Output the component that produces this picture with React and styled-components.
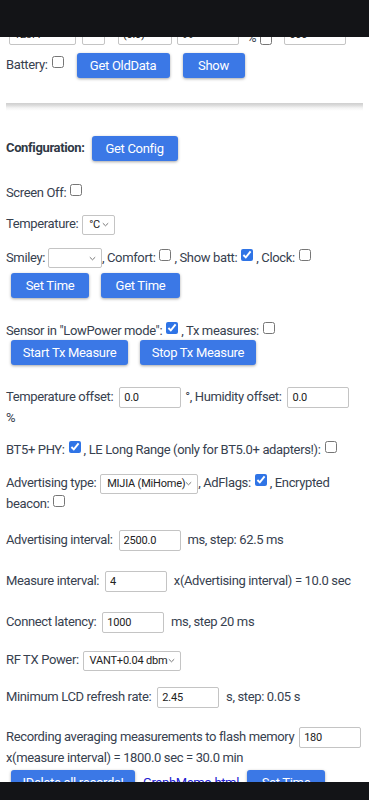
import React from 'react';
import styled, { createGlobalStyle } from 'styled-components';

const Global = createGlobalStyle`
  html, body { margin: 0; padding: 0; background: #fff; }
  body {
    font-family: Roboto, "Noto Sans", "Liberation Sans", sans-serif;
    font-size: 13px;
    letter-spacing: -0.36px;
    color: #37414f;
  }
`;

const TopBar = styled.div`
  position: fixed;
  top: 0;
  left: 0;
  right: 0;
  height: 37px;
  background: #131417;
  z-index: 10;
`;

const BottomBar = styled.div`
  position: fixed;
  bottom: 0;
  left: 0;
  right: 0;
  height: 18px;
  background: #131417;
  z-index: 10;
`;

const Page = styled.div`
  padding: 24px 6px 0;
`;

const InputStrip = styled.div`
  display: flex;
  align-items: flex-end;
  height: 21px;
`;

const Row = styled.div`
  line-height: 20px;
  margin-top: ${(p) => p.$mt || 0}px;
`;

const ButtonRow = styled.div`
  display: flex;
  gap: 12px;
  padding-left: 5px;
  margin-top: ${(p) => p.$mt || 0}px;
`;

const Button = styled.button`
  box-sizing: border-box;
  height: 25px;
  width: ${(p) => p.$w}px;
  margin-left: ${(p) => p.$ml || 0}px;
  padding: 0;
  border: none;
  border-radius: 3px;
  background: #3b78e6;
  color: #fff;
  font-family: Roboto, "Noto Sans", sans-serif;
  font-size: 13px;
  letter-spacing: -0.3px;
  box-shadow: 0 1px 3px rgba(0, 0, 0, 0.35);
  vertical-align: middle;
  flex: none;
`;

const Field = styled.input`
  box-sizing: border-box;
  width: ${(p) => p.$w}px;
  height: 21px;
  margin: 0 ${(p) => p.$mr || 0}px 0 ${(p) => p.$ml || 0}px;
  padding: 0 4px;
  border: 1px solid #c4c4c4;
  border-radius: 2px;
  background: #fff;
  color: #222;
  font-family: Roboto, "Noto Sans", sans-serif;
  font-size: 11px;
  letter-spacing: -0.2px;
  vertical-align: middle;
  flex: none;
`;

const SelectBox = styled.span`
  display: inline-flex;
  align-items: center;
  justify-content: space-between;
  box-sizing: border-box;
  width: ${(p) => p.$w}px;
  height: 20px;
  margin: 0 ${(p) => p.$mr || 0}px 0 ${(p) => p.$ml || 0}px;
  padding: 0 5px 0 6px;
  border: 1px solid #c4c4c4;
  border-radius: 2px;
  background: #fff;
  color: #222;
  font-size: 11px;
  letter-spacing: -0.2px;
  line-height: 18px;
  vertical-align: middle;
  white-space: nowrap;
`;

const Chevron = () => (
  <svg width="7" height="5" viewBox="0 0 7 5" style={{ flex: 'none' }}>
    <path d="M0.8 1.2 L3.5 3.8 L6.2 1.2" fill="none" stroke="#666" strokeWidth="0.9" />
  </svg>
);

const Select = ({ w, ml, children }) => (
  <SelectBox $w={w} $ml={ml}>
    <span>{children}</span>
    <Chevron />
  </SelectBox>
);

const Check = styled.input.attrs({ type: 'checkbox' })`
  width: 12px;
  height: 12px;
  margin: 0 3px 0 4px;
  accent-color: #2f74e6;
  vertical-align: 1px;
`;

const Label = styled.span`
  margin-left: ${(p) => p.$ml || 0}px;
  flex: none;
`;

const Rule = styled.div`
  margin: 25px 0 0;
  height: 8px;
  background: linear-gradient(#cfcfcf 0, #d9d9d9 2px, #f4f4f4 5px, #fff 8px);
`;

const Strong = styled.b`
  font-weight: 700;
  color: #2f3845;
`;

const Link = styled.a`
  color: #2020d0;
  text-decoration: underline;
  margin: 0 8px 0 8px;
  line-height: 25px;
`;

const BottomButtons = styled.div`
  display: flex;
  align-items: flex-start;
  padding-left: 5px;
  margin-top: 2px;
`;

export default function App() {
  return (
    <>
      <Global />
      <TopBar />
      <Page>
        <InputStrip>
          <Field $w={67} $ml={3} defaultValue="123.4" />
          <Field $w={23} $ml={6} defaultValue="" />
          <Field $w={54} $ml={13} defaultValue="(0:0)" />
          <Field $w={62} $ml={5} defaultValue="99" />
          <Label $ml={8}>%</Label>
          <Check />
          <Field $w={62} $ml={9} defaultValue="600" />
        </InputStrip>

        <Row $mt={8}>
          Battery:<Check />
          <Button $w={93} $ml={10}>Get OldData</Button>
          <Button $w={62} $ml={13}>Show</Button>
        </Row>

        <Rule />

        <Row $mt={25}>
          <Strong>Configuration:</Strong>
          <Button $w={86} $ml={7}>Get Config</Button>
        </Row>

        <Row $mt={22}>
          Screen Off:<Check />
        </Row>

        <Row $mt={11}>
          Temperature:{' '}
          <Select w={33} ml={1}>°C</Select>
        </Row>

        <Row $mt={13}>
          Smiley:{' '}
          <Select w={54}></Select>
          , Comfort:<Check />, Show batt:<Check defaultChecked />, Clock:<Check />
        </Row>

        <ButtonRow $mt={5}>
          <Button $w={78}>Set Time</Button>
          <Button $w={79}>Get Time</Button>
        </ButtonRow>

        <Row $mt={23}>
          Sensor in "LowPower mode":<Check defaultChecked />, Tx measures:<Check />
        </Row>

        <ButtonRow $mt={-1}>
          <Button $w={117}>Start Tx Measure</Button>
          <Button $w={116}>Stop Tx Measure</Button>
        </ButtonRow>

        <Row $mt={22}>
          Temperature offset:{' '}
          <Field $w={62} $ml={3} $mr={4} defaultValue="0.0" />
          °, Humidity offset:{' '}
          <Field $w={62} $ml={3} $mr={4} defaultValue="0.0" /> %
        </Row>

        <Row $mt={12}>
          BT5+ PHY:<Check defaultChecked />, LE Long Range (only for BT5.0+ adapters!):<Check />
        </Row>

        <Row $mt={13}>
          Advertising type:{' '}
          <Select w={98} ml={1}>MIJIA (MiHome)</Select>
          , AdFlags:<Check defaultChecked />, Encrypted beacon:<Check />
        </Row>

        <Row $mt={16}>
          Advertising interval:{' '}
          <Field $w={62} $ml={3} $mr={4} defaultValue="2500.0" /> ms, step: 62.5 ms
        </Row>

        <Row $mt={20}>
          Measure interval:{' '}
          <Field $w={62} $ml={3} $mr={4} defaultValue="4" /> x(Advertising interval) = 10.0 sec
        </Row>

        <Row $mt={20}>
          Connect latency:{' '}
          <Field $w={62} $ml={3} $mr={4} defaultValue="1000" /> ms, step 20 ms
        </Row>

        <Row $mt={17}>
          RF TX Power:{' '}
          <Select w={98} ml={1}>VANT+0.04 dbm</Select>
        </Row>

        <Row $mt={16}>
          Minimum LCD refresh rate:{' '}
          <Field $w={62} $ml={3} $mr={4} defaultValue="2.45" /> s, step: 0.05 s
        </Row>

        <Row $mt={19}>
          Recording averaging measurements to flash memory{' '}
          <Field $w={62} $ml={2} $mr={0} defaultValue="180" /> x(measure interval) = 1800.0 sec = 30.0 min
        </Row>

        <BottomButtons>
          <Button $w={124}>IDelete all records!</Button>
          <Link href="#">GraphMemo.html</Link>
          <Button $w={78}>Set Time</Button>
        </BottomButtons>
        <div style={{ height: 40 }} />
      </Page>
      <BottomBar />
    </>
  );
}
